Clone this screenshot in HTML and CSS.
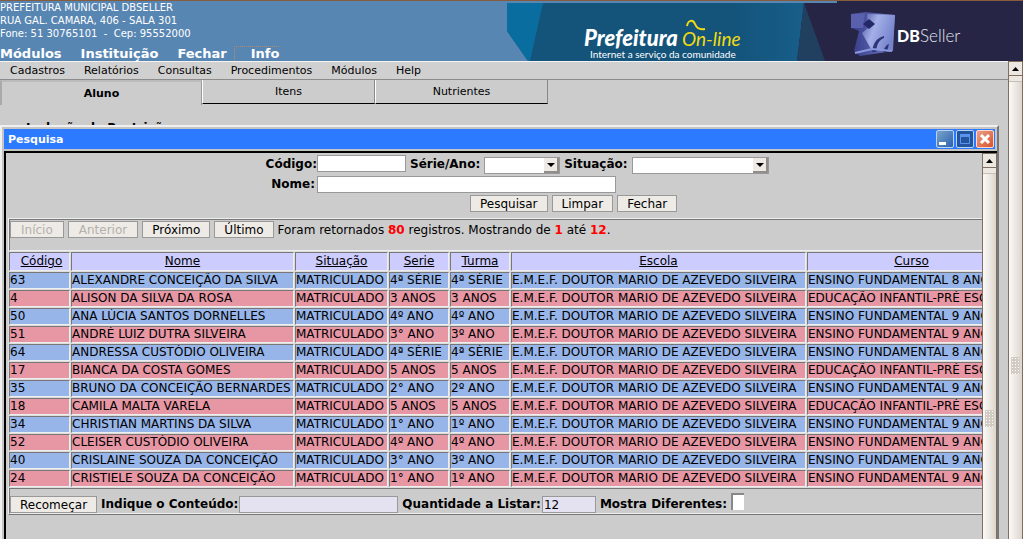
FILE: index.html
```
<!DOCTYPE html>
<html lang="pt-BR">
<head>
<meta charset="utf-8">
<title>Prefeitura On-line</title>
<link rel="stylesheet" href="styles.css">
</head>
<body>
<header class="top">
  <div class="top-left">
    <address class="org">PREFEITURA MUNICIPAL DBSELLER<br>RUA GAL. CAMARA, 406 - SALA 301<br>Fone: 51 30765101 &nbsp;- &nbsp;Cep: 95552000</address>
    <nav class="main-nav">
      <a href="#">Módulos</a><a href="#">Instituição</a><a href="#">Fechar</a><a href="#" class="focused">Info</a>
    </nav>
  </div>
  <svg class="banner" width="516" height="60" viewBox="507 1 516 60" role="img" aria-label="Prefeitura On-line, DBSeller">
    <defs>
      <linearGradient id="sea" x1="0" x2="1"><stop offset="0" stop-color="#14547b"/><stop offset=".75" stop-color="#14547b"/><stop offset="1" stop-color="#175f8a"/></linearGradient>
      <linearGradient id="cube" x1="0" x2="1" y2=".4"><stop offset="0" stop-color="#5058a4"/><stop offset=".45" stop-color="#a4b0e8"/><stop offset="1" stop-color="#7684cc"/></linearGradient>
      <linearGradient id="side" x1="0" x2="1"><stop offset="0" stop-color="#353a86"/><stop offset="1" stop-color="#7480c8"/></linearGradient>
    </defs>
    <path d="M507 3H810V61H528L507 31Z" fill="url(#sea)"/>
    <path d="M507 3H543L530 61H528L507 31Z" fill="#0a6d9f"/>
    <path d="M804 3H837V1H1023V61H797Z" fill="#262545"/>
    <path d="M804 3L825 61H797Z" fill="#21405f"/>
    <text x="584" y="46" class="brand">Prefeitura</text>
    <text x="682" y="46" class="brand-line">On-line</text>
    <path d="M687 26C688 20 693 19 695 24C697 29 700 30 705 29" fill="none" stroke="#f2dc10" stroke-width="2"/>
    <text x="590" y="58" class="slogan">Internet a serviço da comunidade</text>
    <path d="M851 14L865 12L895 15L893 51L860 56L854 51L859 31L851 28Z" fill="url(#side)"/>
    <path d="M867 14L895 15L892 51L871 49L862 33L868 28Z" fill="url(#cube)"/>
    <path d="M851 14L865 13L863 28L851 28Z" fill="#5960ad"/>
    <path d="M869 19L875 24L869 29L863 24Z" fill="#252866"/>
    <path d="M884 36C876 38 873 44 872 52L876 52C877 44 879 40 884 38ZM889 44C886 45 884 48 883 52L887 52Z" fill="#303579"/>
    <path d="M855 53L872 49L892 51" fill="none" stroke="#8b98dd" stroke-width="2"/>
    <text x="897" y="42" class="db">DB</text>
    <text x="920" y="42" class="seller">Seller</text>
  </svg>
</header>

<div class="page">
  <main class="content">
    <nav class="menubar">
      <a href="#">Cadastros</a><a href="#">Relatórios</a><a href="#">Consultas</a><a href="#">Procedimentos</a><a href="#">Módulos</a><a href="#">Help</a>
    </nav>
    <div class="tabs">
      <button type="button" class="tab active">Aluno</button>
      <button type="button" class="tab">Itens</button>
      <button type="button" class="tab">Nutrientes</button>
    </div>
    <h2 class="section">Inclusão de Restrição</h2>

    <section class="window">
      <div class="titlebar">
        <h1>Pesquisa</h1>
        <button type="button" class="wbtn" aria-label="Minimizar"><svg width="18" height="18"><path d="M3 12h7v3H3z" fill="#fff"/></svg></button>
        <button type="button" class="wbtn max" aria-label="Maximizar"><svg width="18" height="18"><path d="M4.500 5.500h9v8h-9z" fill="none" stroke="#5c94ea"/><path d="M4 4h10v3H4z" fill="#5c94ea"/></svg></button>
        <button type="button" class="wbtn close" aria-label="Fechar janela"><svg width="18" height="18"><path d="M5 5L13 13M13 5L5 13" stroke="#fff" stroke-width="3"/></svg></button>
      </div>
      <div class="frame">
        <div class="view">
          <form class="search">
            <label for="cod" class="lead">Código:</label>
            <div class="line">
              <input id="cod" class="w-cod">
              <label for="serie">Série/Ano:</label>
              <span class="pick w-serie"><select id="serie"><option></option></select><svg width="15" height="15"><path d="M0 15V0H15V15Z" fill="#eeebe6"/><path d="M0 13H13V0H15V15H0Z" fill="#918e8a"/><path d="M3 5H11L7 9Z"/></svg></span>
              <label for="sit">Situação:</label>
              <span class="pick w-sit"><select id="sit"><option></option></select><svg width="15" height="15"><path d="M0 15V0H15V15Z" fill="#eeebe6"/><path d="M0 13H13V0H15V15H0Z" fill="#918e8a"/><path d="M3 5H11L7 9Z"/></svg></span>
            </div>
            <label for="nome" class="lead spaced">Nome:</label>
            <div class="line"><input id="nome" class="w-nome"></div>
            <div class="actions">
              <button type="button" class="btn">Pesquisar</button>
              <button type="button" class="btn">Limpar</button>
              <button type="button" class="btn">Fechar</button>
            </div>
          </form>
          <div class="results">
            <div class="pager">
              <button type="button" class="btn" disabled>Início</button>
              <button type="button" class="btn" disabled>Anterior</button>
              <button type="button" class="btn">Próximo</button>
              <button type="button" class="btn">Último</button>
              <span>Foram retornados <b>80</b> registros. Mostrando de <b>1</b> até <b>12</b>.</span>
            </div>
            <table class="grid">
              <colgroup><col class="c1"><col class="c2"><col class="c3"><col class="c4"><col class="c4"><col class="c5"><col class="c6"></colgroup>
              <thead><tr><th><a href="#">Código</a></th><th><a href="#">Nome</a></th><th><a href="#">Situação</a></th><th><a href="#">Serie</a></th><th><a href="#">Turma</a></th><th><a href="#">Escola</a></th><th><a href="#">Curso</a></th></tr></thead>
              <tbody>
              <tr><td>63</td><td>ALEXANDRE CONCEIÇÃO DA SILVA</td><td>MATRICULADO</td><td>4ª SÉRIE</td><td>4ª SÉRIE</td><td>E.M.E.F. DOUTOR MARIO DE AZEVEDO SILVEIRA</td><td>ENSINO FUNDAMENTAL 8 ANOS</td></tr>
              <tr><td>4</td><td>ALISON DA SILVA DA ROSA</td><td>MATRICULADO</td><td>3 ANOS</td><td>3 ANOS</td><td>E.M.E.F. DOUTOR MARIO DE AZEVEDO SILVEIRA</td><td>EDUCAÇÃO INFANTIL-PRÉ ESCOLA</td></tr>
              <tr><td>50</td><td>ANA LÚCIA SANTOS DORNELLES</td><td>MATRICULADO</td><td>4º ANO</td><td>4º ANO</td><td>E.M.E.F. DOUTOR MARIO DE AZEVEDO SILVEIRA</td><td>ENSINO FUNDAMENTAL 9 ANOS</td></tr>
              <tr><td>51</td><td>ANDRÉ LUIZ DUTRA SILVEIRA</td><td>MATRICULADO</td><td>3° ANO</td><td>3º ANO</td><td>E.M.E.F. DOUTOR MARIO DE AZEVEDO SILVEIRA</td><td>ENSINO FUNDAMENTAL 9 ANOS</td></tr>
              <tr><td>64</td><td>ANDRESSA CUSTÓDIO OLIVEIRA</td><td>MATRICULADO</td><td>4ª SÉRIE</td><td>4ª SÉRIE</td><td>E.M.E.F. DOUTOR MARIO DE AZEVEDO SILVEIRA</td><td>ENSINO FUNDAMENTAL 8 ANOS</td></tr>
              <tr><td>17</td><td>BIANCA DA COSTA GOMES</td><td>MATRICULADO</td><td>5 ANOS</td><td>5 ANOS</td><td>E.M.E.F. DOUTOR MARIO DE AZEVEDO SILVEIRA</td><td>EDUCAÇÃO INFANTIL-PRÉ ESCOLA</td></tr>
              <tr><td>35</td><td>BRUNO DA CONCEIÇÃO BERNARDES</td><td>MATRICULADO</td><td>2° ANO</td><td>2º ANO</td><td>E.M.E.F. DOUTOR MARIO DE AZEVEDO SILVEIRA</td><td>ENSINO FUNDAMENTAL 9 ANOS</td></tr>
              <tr><td>18</td><td>CAMILA MALTA VARELA</td><td>MATRICULADO</td><td>5 ANOS</td><td>5 ANOS</td><td>E.M.E.F. DOUTOR MARIO DE AZEVEDO SILVEIRA</td><td>EDUCAÇÃO INFANTIL-PRÉ ESCOLA</td></tr>
              <tr><td>34</td><td>CHRISTIAN MARTINS DA SILVA</td><td>MATRICULADO</td><td>1° ANO</td><td>1º ANO</td><td>E.M.E.F. DOUTOR MARIO DE AZEVEDO SILVEIRA</td><td>ENSINO FUNDAMENTAL 9 ANOS</td></tr>
              <tr><td>52</td><td>CLEISER CUSTÓDIO OLIVEIRA</td><td>MATRICULADO</td><td>4º ANO</td><td>4º ANO</td><td>E.M.E.F. DOUTOR MARIO DE AZEVEDO SILVEIRA</td><td>ENSINO FUNDAMENTAL 9 ANOS</td></tr>
              <tr><td>40</td><td>CRISLAINE SOUZA DA CONCEIÇÃO</td><td>MATRICULADO</td><td>3° ANO</td><td>3º ANO</td><td>E.M.E.F. DOUTOR MARIO DE AZEVEDO SILVEIRA</td><td>ENSINO FUNDAMENTAL 9 ANOS</td></tr>
              <tr><td>24</td><td>CRISTIELE SOUZA DA CONCEIÇÃO</td><td>MATRICULADO</td><td>1° ANO</td><td>1º ANO</td><td>E.M.E.F. DOUTOR MARIO DE AZEVEDO SILVEIRA</td><td>ENSINO FUNDAMENTAL 9 ANOS</td></tr>
              </tbody>
            </table>
            <div class="refine">
              <button type="button" class="btn">Recomeçar</button>
              <label for="cont">Indique o Conteúdo:</label><input id="cont" class="tint w-cont">
              <label for="qtd">Quantidade a Listar:</label><input id="qtd" class="tint w-qtd" value="12">
              <label for="dif">Mostra Diferentes:</label><input id="dif" type="checkbox" class="check">
            </div>
          </div>
        </div>
        <div class="scroll inner"><span class="up"><svg width="7" height="4"><path d="M0 4L3.500 0L7 4Z"/></svg></span><span class="track"></span><span class="thumb"><i class="grip"></i></span></div>
      </div>
    </section>
  </main>
  <div class="scroll"><span class="up"><svg width="7" height="4"><path d="M0 4L3.500 0L7 4Z"/></svg></span><span class="track"></span><span class="thumb"><i class="grip"></i></span></div>
</div>
</body>
</html>
```
FILE: styles.css
```
* { box-sizing: border-box; }
body {
  margin: 0;
  height: 100vh;
  display: flex;
  flex-direction: column;
  overflow: hidden;
  background: #ccc;
  color: #000;
  font: 12px/15px "DejaVu Sans", sans-serif;
}
a { color: inherit; text-decoration: none; }
button, input, select { font: inherit; color: inherit; margin: 0; }

/* Header */
.top {
  flex: none;
  display: flex;
  justify-content: space-between;
  height: 61px;
  border-top: 1px solid #865c3c;
  background: #5886b3;
  color: #fff;
  overflow: hidden;
}
.top-left { display: flex; flex-direction: column; justify-content: space-between; }
.org { font-style: normal; font-size: 10px; line-height: 13px; white-space: nowrap; }
.main-nav { display: flex; font-size: 13px; font-weight: bold; line-height: 14px; }
.main-nav a { margin-right: 19px; padding-top: 1px; }
.main-nav .focused { margin-left: -12px; padding: 0 0 0 16px; border: 1px dotted #b48a6c; border-width: 1px 0 0 1px; }
.banner { flex: none; display: block; }
.brand { font: italic 900 22px Lato, sans-serif; fill: #fff; }
.brand-line { font: italic 400 19px Lato, sans-serif; fill: #f2dc10; }
.slogan { font: 400 10px Lato, sans-serif; fill: #fff; }
.db { font: 900 16px Lato, sans-serif; fill: #fff; }
.seller { font: 300 17px Lato, sans-serif; fill: #e4e4ee; }

/* Page */
.page { flex: 1; display: flex; min-height: 0; }
.content { flex: 1; min-width: 0; position: relative; overflow: hidden; }
.menubar {
  display: flex;
  gap: 19px;
  padding: 0 10px;
  height: 19px;
  border-top: 1px solid #f4f4f4;
  border-bottom: 1px solid #8c8c8c;
  background: #d0d0d0;
  font-size: 11px;
  line-height: 17px;
}
.tabs { display: flex; align-items: flex-start; }
.tab {
  width: 173px;
  height: 24px;
  padding: 0;
  border: 0;
  border-left: 1px solid #fff;
  border-right: 1px solid #888;
  border-bottom: 1px solid #000;
  background: #ccc;
  font-size: 11px;
}
.tab.active {
  width: 202px;
  height: 25px;
  border: 0;
  border-top: 2px solid #bbb;
  border-left: 2px solid #a9a9a9;
  border-right: 1px solid #999;
  font-weight: bold;
}
.section { margin: 16px 0 0 26px; font-size: 12px; line-height: 15px; }

/* Dialog over the page */
.window {
  position: absolute;
  top: 64px;
  right: 9px;
  bottom: 0;
  left: 0;
  display: flex;
  flex-direction: column;
  gap: 2px;
  padding: 2px 0 0 2px;
  border: 2px solid #f0f0f0;
  border-right-color: #777;
  border-bottom: 0;
  background: #c4c4c4;
}
.titlebar {
  display: flex;
  align-items: center;
  gap: 2px;
  height: 20px;
  margin-right: 2px;
  padding: 0 1px 0 4px;
  background: #2c7aff;
  color: #fff;
}
.titlebar h1 { flex: 1; margin: 0; font-size: 11px; }
.wbtn { width: 18px; height: 18px; padding: 0; border: 1px solid #b9d2f4; border-radius: 2px; background: linear-gradient(135deg, #79a4c8, #2b62b0); }
.wbtn svg { display: block; margin: -1px; }
.wbtn.max { background: #2254a0; }
.wbtn.close { border-color: #ffd8cc; background: linear-gradient(135deg, #e8a18c, #d9542c); }
.frame { flex: 1; min-height: 0; display: flex; border: 2px solid #000; border-width: 2px 0 0 2px; background: #ccc; }
.view { flex: 1; min-width: 0; overflow: hidden; padding: 2px 0 0 2px; white-space: nowrap; }

/* Search form */
.search {
  display: grid;
  grid-template-columns: 309px 1fr;
  row-gap: 2px;
  align-items: center;
  padding-bottom: 6px;
}
label { font-weight: bold; }
.search label { line-height: 17px; }
.lead { text-align: right; }
.lead.spaced { padding-right: 2px; }
.line { display: flex; align-items: flex-start; gap: 4px; }
.line label { line-height: 19px; }
input, select { height: 17px; padding: 0 1px; border: 1px solid #999; border-radius: 0; background: #fff; }
.w-cod { width: 89px; }
.w-nome { width: 299px; }
.pick { position: relative; display: flex; padding-top: 2px; }
.pick select { width: 100%; appearance: none; }
.pick svg { position: absolute; right: 1px; top: 3px; pointer-events: none; }
.w-serie { width: 76px; }
.w-sit { width: 137px; }
.actions { grid-column: 1 / 3; display: flex; gap: 4px; padding-left: 462px; }
.btn { height: 17px; padding: 0 9px; border: 1px solid #999; background: #eeebe6; line-height: 16px; }
.btn:disabled { padding: 0 10px; color: #b4b0ac; }

/* Results */
.results { border: 1px solid #eee; border-width: 1px 0 0 1px; border-bottom: 1px solid #777; }
.pager {
  display: flex;
  align-items: flex-start;
  gap: 4px;
  height: 32px;
  padding-top: 1px;
  border: 1px solid #777;
  border-width: 1px 0 1px 1px;
  border-bottom-color: #eee;
}
.pager span { line-height: 19px; }
.pager b { color: #f00; }
.grid { table-layout: fixed; width: 1009px; border-spacing: 1px; margin-left: -1px; background: #dcdcdc; }
.c1 { width: 61px; }
.c2 { width: 223px; }
.c3 { width: 93px; }
.c4 { width: 60px; }
.c5 { width: 295px; }
.c6 { width: 209px; }
.grid th, .grid td { padding: 0; border: 1px solid #777; border-right-color: #eee; border-bottom-color: #eee; overflow: hidden; }
.grid th { height: 19px; background: #ccf; font-weight: normal; }
.grid th:first-child { padding-left: 4px; }
.grid th a { text-decoration: underline; }
.grid tr:nth-child(odd) td { background: #97b5e8; }
.grid tr:nth-child(even) td { background: #e796a4; }
.refine {
  display: flex;
  align-items: flex-end;
  height: 26px;
  border: 1px solid #777;
  border-width: 1px 0 1px 1px;
  border-bottom-color: #eee;
}
.refine label { margin-left: 4px; line-height: 17px; }
.tint { margin-left: 1px; background: #e4e2f0; }
.w-cont { width: 159px; }
.w-qtd { width: 54px; }
.check { appearance: none; width: 13px; height: 17px; margin: 0 0 3px 4px; border: 2px solid #888; border-right: 0; border-bottom: 0; }

/* Scrollbars */
.scroll { flex: none; display: flex; flex-direction: column; width: 15px; border: 1px solid #806f61; border-bottom: 0; background: #ece7e1; }
.up { display: flex; align-items: center; justify-content: center; height: 14px; border-bottom: 1px solid #806f61; }
.track { height: 6px; border-bottom: 1px solid #c8c0b8; }
.thumb { flex: 1; background: linear-gradient(90deg, #fbfaf8, #ddd5cd); }
.grip { display: block; width: 9px; height: 17px; margin: 275px auto 0; background: radial-gradient(circle, #fff 1px, transparent 1px) 0 0 / 3px 3px, #d2cbc4; }
.inner .grip { margin-top: 236px; }
```
